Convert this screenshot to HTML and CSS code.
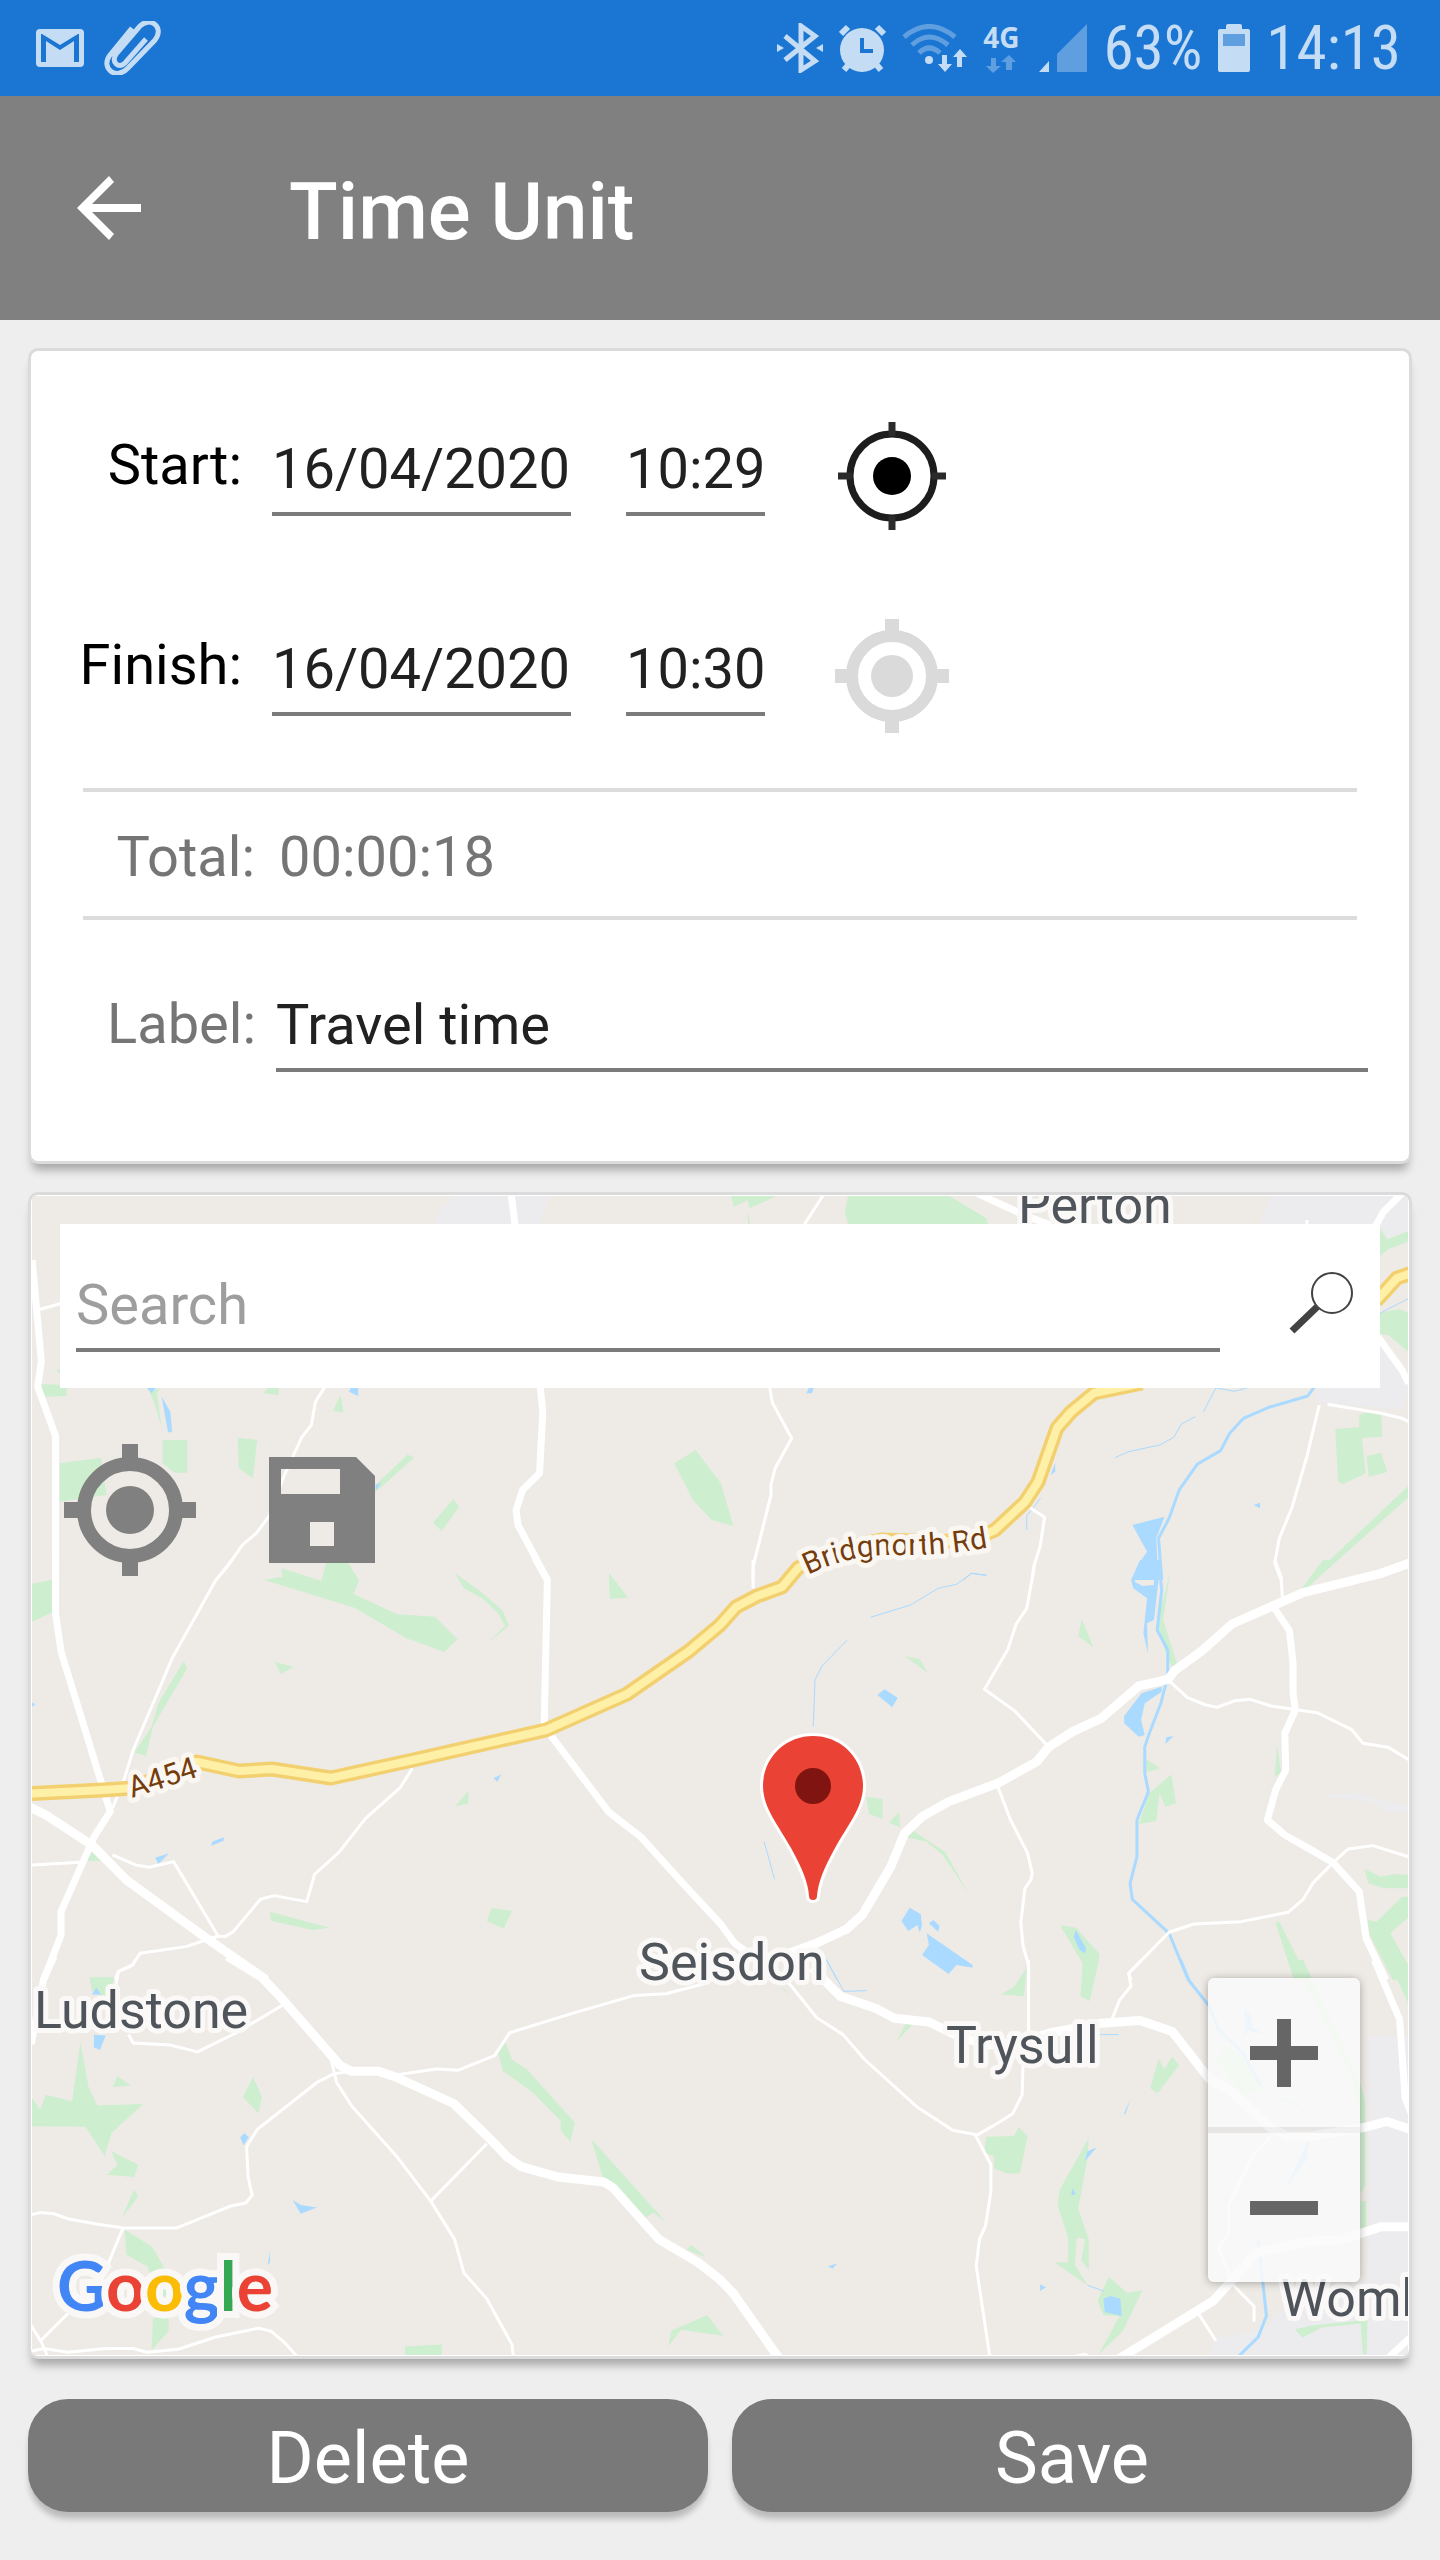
FILE: index.html
```html
<!DOCTYPE html>
<html lang="en">
<head>
<meta charset="utf-8">
<meta name="viewport" content="width=device-width, initial-scale=1">
<title>Time Unit</title>
<link rel="stylesheet" href="styles.css">
</head>
<body>
<div class="status">
  <div class="status-group">
    <svg class="gmail" viewBox="0 0 48 38" width="48" height="38" aria-hidden="true"><path class="lit" fill-rule="evenodd" d="M4 0H44Q48 0 48 4V34Q48 38 44 38H4Q0 38 0 34V4Q0 0 4 0ZM5 5V33H10V12L24 21L38 12V33H43V5H42L24 16L6 5Z"/></svg>
    <svg viewBox="0 0 58 54" width="58" height="54" aria-hidden="true"><path class="lit-line" stroke-width="5" d="M29 7L7 34C-3 47 13 60 25 47L52 19C62 6 47 -5 37 5L13 33C8 42 16 48 22 42L43 18"/></svg>
  </div>
  <div class="status-group status-right">
    <svg viewBox="0 0 46 50" width="46" height="50" aria-hidden="true"><path class="lit-line" stroke-width="5" d="M8 13L38 38L24 47V3L38 13L8 37"/><path class="lit" d="M0 21L7 25L0 29ZM46 21L39 25L46 29Z"/></svg>
    <svg viewBox="0 0 47 48" width="47" height="48" aria-hidden="true"><circle class="lit" cx="23" cy="26" r="22"/><path class="lit-line" stroke-width="6" d="M2 10L9 3M45 10L38 3M5 46L11 39M42 46L36 39"/><path class="blue-line" d="M23 14V27H34"/></svg>
    <svg viewBox="0 0 65 48" width="65" height="48" aria-hidden="true"><path class="dim-line" stroke-width="5" d="M2 13Q27 -8 53 13M10 21Q27 5 46 21M17 29Q27 19 38 29"/><circle class="lit" cx="27" cy="36" r="4"/><path class="lit" d="M40 31H45V40H50L43 48L36 40H40ZM55 43H60V33H65L58 25L51 33H55Z"/></svg>
    <span class="network">4G<svg viewBox="0 0 30 18" width="30" height="18" aria-hidden="true"><path class="dim" d="M5 3H10V11H15L7 18L0 11H5ZM20 15H26V7H30L23 0L15 7H20Z"/></svg></span>
  </div>
  <div class="status-group status-text">
    <svg viewBox="0 0 48 48" width="48" height="48" aria-hidden="true"><path class="lit" d="M0 48L10 37V48Z"/><path class="dim" d="M18 48V30L48 0V48Z"/></svg>
    <span>63%</span>
    <svg viewBox="0 0 32 48" width="32" height="48" aria-hidden="true"><path class="lit" d="M8 5V2Q8 0 10 0H22Q24 0 24 2V5H30Q32 5 32 7V46Q32 48 30 48H2Q0 48 0 46V7Q0 5 2 5Z"/><path class="dim" d="M5 10H27V22H5Z"/></svg>
    <span>14:13</span>
  </div>
</div>

<header class="bar">
  <button class="icon-btn" type="button" aria-label="Back"><svg viewBox="0 0 64 64" width="64" height="64"><path d="M64 28V36H15L37 58L32 64L0 32L32 0L37 6L15 28Z" fill="#fff"/></svg></button>
  <h1>Time Unit</h1>
</header>

<main>
  <form class="card details">
    <div class="row">
      <label for="start-date">Start:</label>
      <input class="date" id="start-date" type="text" value="16/04/2020">
      <input class="time" type="text" value="10:29" aria-label="Start time">
      <button class="icon-btn locate" type="button" aria-label="Set start location"><svg viewBox="0 0 114 114" width="114" height="114"><circle cx="57" cy="57" r="42" fill="none" stroke="#1d1d1d" stroke-width="7"/><circle cx="57" cy="57" r="19"/><path d="M57 3V17M57 97V111M3 57H17M97 57H111" stroke="#2b2b2b" stroke-width="7"/></svg></button>
    </div>
    <div class="row">
      <label for="finish-date">Finish:</label>
      <input class="date" id="finish-date" type="text" value="16/04/2020">
      <input class="time" type="text" value="10:30" aria-label="Finish time">
      <button class="icon-btn locate" type="button" aria-label="Set finish location"><svg viewBox="0 0 114 114" width="114" height="114"><g fill="none" stroke="#dadada"><circle cx="57" cy="57" r="40" stroke-width="12"/><path d="M57 0V14M57 100V114M0 57H14M100 57H114" stroke-width="14"/></g><circle cx="57" cy="57" r="21" fill="#dadada"/></svg></button>
    </div>
    <div class="total"><span class="caption">Total:</span><output>00:00:18</output></div>
    <div class="label-row">
      <label class="caption" for="unit-label">Label:</label>
      <input id="unit-label" type="text" value="Travel time">
    </div>
  </form>

  <section class="card map" aria-label="Map">
    <svg class="map-art" viewBox="32 1196 1376 1159" preserveAspectRatio="xMidYMid slice" aria-hidden="true">
      <rect class="land" x="-1000" y="0" width="4000" height="4000"/>

      <!-- north west -->
      <g transform="translate(0 1180) scale(.4592 .3333)">
        <path class="town" d="M955 90L990 48H1198L1175 132H950Z"/>
        <path class="wood" d="M88 612L145 615V648L98 650ZM123 570L135 565V590ZM573 640L585 620H608L606 645ZM742 645L748 698L725 692ZM518 773L560 780L551 895L520 865ZM354 780H408V878H380L354 850ZM130 850L220 833L232 945L130 965ZM887 824L903 832L818 936V915ZM987 958L1000 980L962 1054L943 1028ZM1468 850L1515 810L1570 910L1597 1038L1550 1020L1510 962ZM348 625L325 635L335 665L352 740L342 640Z"/>
        <path class="water" d="M318 620H342L330 640ZM352 650L371 695L375 757H366ZM760 635L765 620H780V648ZM818 915L830 908L818 932Z"/>
        <path class="lane" d="M82 390L135 370M708 620L687 665L678 735L657 772L618 890L585 1010L558 1060L528 1095L495 1160L470 1200"/>
        <path class="road" d="M1113 40L1122 140M1176 615L1182 695L1175 880L1138 930L1124 990L1128 1035L1192 1200M70 240L90 545L82 620L121 768V1200"/>
      </g>
      <!-- north east -->
      <g transform="translate(720 1180) scale(.4592 .3333)">
        <path class="town" d="M1205 40H1505V150L1460 180L1430 132H1175ZM1430 470L1505 600L1485 690L1300 665V620H1437Z"/>
        <path class="wood" d="M22 40H135L65 85L60 60L30 80ZM60 85L65 132H61ZM280 40H490L580 115L585 140H280L272 95ZM1430 130L1453 178L1505 150V182L1455 208L1430 235ZM1430 400L1480 388L1505 400V522L1455 465L1430 462ZM1340 747L1392 742V705L1410 697L1440 705L1442 770L1398 774L1406 880L1358 912L1346 905ZM1408 828L1440 818L1453 876L1413 890ZM1505 910V945L1297 1200H1282Z"/>
        <path class="water" d="M188 640L195 620H205L200 640ZM898 1035L968 1010L950 1075L955 1200H897L912 1150L930 1115ZM720 885L730 848V875ZM1162 975L1176 968V985Z"/>
        <path class="stream" d="M1430 405L1500 355M1080 624L1053 695M1080 624L1120 634L1148 624M1035 710L1005 732L988 772L958 795L890 815L860 833M698 955L668 1008V1050M530 1200L548 1180L580 1187"/>
        <path class="river" d="M1295 620L1280 648L1195 682L1140 715L1110 760L1090 812L1040 852L1000 930L978 1015L955 1075L962 1200"/>
        <path class="lane" d="M225 45L183 135M1278 120V135M1305 675L1278 830L1245 985L1218 1075L1208 1150L1222 1200M108 620L114 668L156 775L120 865L111 915V945L72 1160V1200M672 980L707 1012L697 1100L683 1160L680 1200M1323 673L1440 700L1485 715L1500 725"/>
        <path class="road" d="M560 40L615 75L670 110L720 135M1485 40L1445 95L1425 145M1430 465L1485 570L1500 610"/>
      </g>
      <!-- west -->
      <g transform="translate(0 1560) scale(.4592 .3333)">
        <path class="wood" d="M60 74L113 60V158L60 190ZM575 60L615 50L613 25L700 63L712 0H755L782 62L770 102L865 163L947 170L996 238L968 276L885 235L772 143ZM990 38L1050 98L1095 152L1108 197L1060 252L1100 197L1085 160L1050 115L1010 85ZM1326 38L1368 113L1328 117ZM598 306L640 320L612 342ZM400 303L408 325L372 408L333 500L318 588L293 578L330 500L345 430ZM1020 692V730L990 740ZM200 875L220 903H188ZM588 1055L718 1103L680 1110L590 1082ZM1070 1045L1115 1052L1097 1106L1060 1083Z"/>
        <path class="water" d="M1075 655L1092 643L1083 665ZM462 845L487 832V842L460 857ZM338 893L368 880L345 912ZM60 428H70L77 433L70 440Z"/>
        <path class="lane" d="M505 0L468 65L375 295L290 570L270 660L245 745M60 916L175 907M245 885L295 915L325 922L378 905L475 1128L490 1130L508 1115L567 1018L597 1007L668 1025L685 943L738 877L795 777L872 682L898 625M475 1128L405 1160L305 1180L287 1217L258 1235L250 1260"/>
        <path class="road" d="M121 -10V160L133 275L240 755L205 830L133 1055V1125L95 1260M1165 -5L1192 60L1185 500L1325 755L1395 830L1487 970L1568 1090L1600 1150L1640 1190"/>
        <path class="main-road" d="M60 738L100 765L200 855L275 960L450 1135L580 1260"/>
      </g>
      <!-- east -->
      <g transform="translate(720 1560) scale(.4592 .3333)">
        <path class="town" d="M1320 700H1400L1440 720L1505 740V755H1450L1420 725L1320 710Z"/>
        <path class="wood" d="M980 38L965 180L995 310L985 320L975 300L952 190ZM788 178L813 262L780 228ZM402 288L435 298L452 338ZM1213 553L1222 640L1208 650ZM928 597L958 625L928 637ZM983 643L993 730L970 740L957 700L950 783L912 792L935 700ZM318 710L354 717V777L325 762ZM390 755L392 802L368 788ZM405 832L420 812L490 875L543 1005L485 885L450 845ZM740 1095L775 1103L827 1183L815 1260H790L792 1215ZM1210 1090L1217 1083L1282 1260H1250ZM1403 927L1440 950L1465 943L1505 945V985H1445L1412 970ZM1410 1080L1430 1085L1485 1010H1505V1065L1460 1120L1505 1230V1260H1465L1415 1125ZM1340 0H1313L1265 90H1275Z"/>
        <path class="water" fill-rule="evenodd" d="M915 0H960L945 180L930 190L932 280L922 220L930 115L900 85L895 60ZM912 18L903 65L920 78L945 75V35ZM962 380V395L925 430L917 480L925 525L912 530L880 490V468L918 400ZM343 405L358 388L387 413L375 442ZM972 532L988 528L970 552ZM395 1083L413 1043L437 1062L440 1095L435 1118L430 1095L410 1113ZM455 1090L465 1080L478 1098L475 1115ZM450 1120L550 1215V1223L515 1215L498 1242L440 1185L455 1155ZM775 1110L797 1165L795 1180L783 1170L770 1130Z"/>
        <path class="stream" d="M580 45L548 40L515 73L475 85L415 135L328 172M277 240L222 318L207 360L203 500M96 845L119 958M228 1190L255 1260"/>
        <path class="river" d="M955 0L962 90L952 210L975 270V350L960 430L935 520L925 560V640L933 695L908 780V890L893 970L898 1018L978 1120L1020 1260"/>
        <path class="lane" d="M687 0L668 145L645 192L627 268L576 388L642 453L715 560M605 680L632 778L670 880L680 940L677 960L664 985L655 1088L660 1158L672 1215V1260M980 365L1018 413L1058 435L1082 442L1122 422L1155 418L1200 438L1300 458L1375 508L1400 550L1455 562L1505 603M1505 893L1422 857L1368 867L1335 908L1292 968L1270 1018L1237 1057L1135 1085L1032 1092L978 1117L890 1240L895 1260M1208 0L1222 50L1225 120M72 0V85"/>
        <path class="road" d="M1205 140L1240 212L1248 310V400L1253 450L1230 520L1232 630L1210 690L1192 780L1230 825L1275 860L1335 908L1392 995L1407 1135L1450 1260"/>
        <path class="main-road" d="M1510 5L1440 40L1270 98L1205 137L1115 192L1050 272L990 332L976 358L912 378L830 475L768 515L715 562L690 605L605 670L498 725L440 770L402 820L372 920L310 1065L275 1108L210 1150L150 1180"/>
      </g>
      <!-- south west -->
      <g transform="translate(0 1960) scale(.4592 .3827)">
        <path class="wood" d="M175 215L193 333L212 380L312 376L243 452L228 512L186 436L60 434V345L87 390L100 352L157 370ZM255 303L285 328L246 332ZM551 306L570 356L563 401L529 358ZM242 499L301 535L292 567L232 561L256 535ZM292 600L301 618L265 675ZM272 705L332 750L365 820L400 880H350L320 800L275 770ZM333 937L367 930V970L330 1020ZM1100 212L1115 260L1148 286L1252 425L1242 475L1221 445V420L1157 343L1095 290L1085 245ZM1287 467L1452 687L1422 660L1405 675L1335 590L1312 565ZM1505 745L1538 777L1495 757ZM1455 1010L1462 968L1540 928L1575 982L1483 966ZM882 1010L962 1005V1040H882ZM195 45H250L230 100L200 80Z"/>
        <path class="water" d="M205 195L230 197L218 235L204 228ZM523 463L532 453L542 463L530 484ZM637 627L655 640L690 647L655 663ZM588 760V790L583 797ZM200 90L210 72L220 90Z"/>
        <path class="lane" d="M295 0L290 12L258 30L250 80M280 195L290 217L370 222L430 240L515 190L617 117M720 255L733 320L765 380L865 515L938 630L990 730L1010 817L1060 885L1115 1005L1118 1040M765 291L728 297L690 320L560 443L537 488L540 565L549 615L535 635L505 642L385 700H268L210 690L150 677L118 663L87 660L60 668M268 700L220 838L90 993M60 940L90 998L105 1040M60 1024L95 1015L148 1025L230 1015H290L320 1025L388 1017L470 985L563 962L590 970L620 1000L650 1040M1060 480L938 630M865 300L950 285L998 288L1077 250L1110 190L1250 138L1380 93L1450 88L1540 60"/>
        <path class="road" d="M118 -10L95 50L85 110L68 220"/>
        <path class="main-road" d="M495 -10L570 45L617 105L740 275L765 291H825L860 305L988 375L1065 465L1105 515L1135 540L1215 567L1315 580L1335 595L1435 730L1520 790L1568 835L1596 870L1696 1040"/>
      </g>
      <!-- south east -->
      <g transform="translate(720 1960) scale(.4592 .3827)">
        <path class="town" d="M1412 198H1510V1040H1065L1080 990L1180 965L1240 900L1405 840L1412 760Z"/>
        <path class="wood" d="M668 20L662 95L612 90L640 70ZM790 0H825L805 108L785 95ZM405 165L418 170L385 212ZM127 60L155 95L140 80ZM955 258L967 285L985 253L1000 275L953 348L937 335ZM580 462L640 460L650 437L670 460L653 558H625L597 545V512L575 505ZM803 465L800 520L780 650L803 730V810L787 785L795 730L777 725L773 797L800 850L728 790H758V725L735 640L740 600ZM847 828L887 870L920 863L877 970L825 1030L870 930L835 928L822 890ZM1250 0H1270L1395 325L1405 370V590L1395 610V420L1380 320ZM1455 0H1490L1505 60V130ZM1395 630H1407V700L1395 710ZM1100 222L1145 260L1180 345L1135 355L1120 320L1080 270ZM1252 965L1290 955L1410 940L1408 1030H1400L1395 950L1310 960L1268 987Z"/>
        <path class="water" d="M895 362L882 405L880 400ZM820 490L795 525L800 500ZM768 597L775 612L765 615ZM835 885L850 878L872 885L875 930L838 920ZM697 848L710 855L697 865ZM235 800L255 793L245 807ZM1140 128L1155 140L1160 175L1185 195L1150 185L1140 205L1145 165ZM1283 465L1278 520L1228 605L1262 520Z"/>
        <path class="stream" d="M232 0L270 82L320 80M780 195H868M800 850L835 865M1215 360L1250 372L1272 395"/>
        <path class="river" d="M1003 0L1022 55L1065 120L1085 180L1140 245L1178 330M1172 730L1190 930L1172 985L1130 1035"/>
        <path class="lane" d="M150 60L210 150L268 195L315 260L430 385L507 445L560 457L600 430L637 402L658 352L660 270M672 0V190M918 0L890 35L895 68L870 105L852 160M555 455L590 535V605L578 695L565 730L558 800L588 1040M1200 460L1163 505L1108 640V710L1085 755L1118 850L1163 905V945M1040 920L1080 995M765 1038L795 1030L805 1038"/>
        <path class="road" d="M1425 0L1480 155L1492 360L1505 400M1455 1040L1505 985"/>
        <path class="main-road" d="M200 20L262 95L340 127L380 152L455 162L520 200L585 222L650 215L720 190L830 165L915 158L985 187L1065 310L1120 350L1200 440L1235 460H1290L1405 437L1452 422L1505 443M865 1045L1075 890L1168 765L1280 735L1350 732L1440 697H1510"/>
      </g>

      <g class="a-road">
        <path class="a-road-edge" d="M20 1794L103 1790L133 1788L188 1764L197 1762L239 1771L272 1769L331 1778L413 1760L546 1730L627 1694L689 1651L720 1625L736 1607L757 1596L782 1587L798 1568L835 1550L881 1540L940 1542L977 1538L995 1530L1025 1502L1038 1482L1057 1428L1071 1412L1094 1393L1142 1383M1376 1301L1397 1278L1415 1272"/>
        <path class="a-road-fill" d="M20 1794L103 1790L133 1788L188 1764L197 1762L239 1771L272 1769L331 1778L413 1760L546 1730L627 1694L689 1651L720 1625L736 1607L757 1596L782 1587L798 1568L835 1550L881 1540L940 1542L977 1538L995 1530L1025 1502L1038 1482L1057 1428L1071 1412L1094 1393L1142 1383M1376 1301L1397 1278L1415 1272"/>
      </g>

      <path id="bridgnorth" fill="none" d="M808 1575Q850 1554 895 1555T986 1548L1040 1536"/>
      <g class="road-name">
        <text><textPath href="#bridgnorth">Bridgnorth Rd</textPath></text>
        <text transform="translate(132 1798) rotate(-18)">A454</text>
      </g>
      <g class="place">
        <text x="1018" y="1223">Perton</text>
        <text x="639" y="1980">Seisdon</text>
        <text x="34" y="2028">Ludstone</text>
        <text x="946" y="2063">Trysull</text>
        <text x="1281" y="2316">Wombourne</text>
      </g>
      <path class="pin" d="M813 1736C841 1736 863 1758 863 1786C863 1808 847 1826 835 1848C824 1868 818 1882 817 1896Q817 1900 813 1900Q809 1900 809 1896C808 1882 802 1868 791 1848C779 1826 763 1808 763 1786C763 1758 785 1736 813 1736Z"/>
      <circle cx="813" cy="1786" r="18" fill="#7f1410"/>
    </svg>

    <div class="map-top">
      <form class="search">
        <input type="text" placeholder="Search" aria-label="Search">
        <button class="icon-btn" type="button" aria-label="Search the map"><svg viewBox="0 0 66 64" width="66" height="64"><circle cx="44" cy="23" r="20" fill="none" stroke="#424242" stroke-width="2"/><path d="M29 37L4 61" stroke="#424242" stroke-width="7"/></svg></button>
      </form>
      <div class="tools">
        <button class="icon-btn" type="button" aria-label="My location"><svg viewBox="0 0 134 134" width="134" height="134"><g fill="none" stroke="#808080"><circle cx="67" cy="67" r="46" stroke-width="14"/><path d="M67 1V18M67 116V133M1 67H18M116 67H133" stroke-width="16"/></g><circle cx="67" cy="67" r="24" fill="#808080"/></svg></button>
        <button class="icon-btn" type="button" aria-label="Save location"><svg viewBox="0 0 106 106" width="106" height="106"><path fill="#808080" fill-rule="evenodd" d="M0 0H87L106 19V106H0ZM12 12V37H71V12ZM41 65V89H65V65Z"/></svg></button>
      </div>
    </div>

    <div class="zoom">
      <button type="button" aria-label="Zoom in"><svg viewBox="0 0 68 68" width="68" height="68"><path d="M27 0H41V27H68V41H41V68H27V41H0V27H27Z" fill="#666"/></svg></button>
      <button type="button" aria-label="Zoom out"><svg viewBox="0 0 68 68" width="68" height="68"><path d="M0 27H68V41H0Z" fill="#666"/></svg></button>
    </div>
    <div class="google"><span class="g-blue">G</span><span class="g-red">o</span><span class="g-yellow">o</span><span class="g-blue">g</span><span class="g-green">l</span><span class="g-red">e</span></div>
  </section>

  <div class="actions">
    <button type="button">Delete</button>
    <button type="button">Save</button>
  </div>
</main>
</body>
</html>
```
FILE: styles.css
```css
* { box-sizing: border-box; }

body {
  margin: 0;
  min-height: 100vh;
  display: flex;
  flex-direction: column;
  background: #eee;
  color: #212121;
  font-family: Roboto, "Liberation Sans", sans-serif;
  font-size: 56px;
  line-height: 64px;
}

svg { display: block; flex: none; }
button, input { font: inherit; color: inherit; border: 0; margin: 0; padding: 0; background: none; }
button { cursor: pointer; }
input { min-width: 0; border-bottom: 4px solid #7b7b7b; padding-bottom: 10px; height: 80px; border-radius: 0; }
input::placeholder { color: #9e9e9e; opacity: 1; }
.icon-btn { display: flex; align-items: center; justify-content: center; flex: none; }

/* status bar */
.status { display: flex; align-items: center; height: 96px; padding: 0 39px 0 36px; background: #1a75d3; color: #c4dcf4; }
.status-group { display: flex; align-items: center; gap: 19px; }
.status-right { margin-left: auto; gap: 16px; margin-right: 20px; }
.status-text { gap: 16px; font-family: "Roboto Condensed", "Liberation Sans Narrow", Roboto, sans-serif; font-size: 61px; }
.network { display: flex; flex-direction: column; align-items: center; gap: 4px; font: bold 28px/28px "Open Sans", sans-serif; }
.lit { fill: #c4dcf4; }
.dim { fill: #5f9fe0; }
.lit-line { fill: none; stroke: #c4dcf4; }
.dim-line { fill: none; stroke: #5f9fe0; }
.blue-line { fill: none; stroke: #1a75d3; stroke-width: 4px; }

/* title bar */
.bar { display: flex; align-items: center; gap: 148px; height: 224px; padding: 0 77px; background: #808080; color: #fff; }
.bar h1 { margin: 0; padding-top: 8px; font-size: 80px; line-height: 96px; font-weight: 500; }

main { flex: 1; display: flex; flex-direction: column; padding: 28px 28px 48px; }
.card { background: #fff; border: 3px solid #dbdbdb; border-radius: 10px; box-shadow: 0 10px 10px -4px rgba(0, 0, 0, .3); }

/* times and label */
.details { padding: 25px 0 89px; }
.row { display: flex; align-items: center; height: 200px; }
.row label { width: 211px; margin-right: 30px; padding-bottom: 22px; text-align: right; color: #000; }
.date { width: 299px; margin-right: 55px; }
.time { width: 139px; margin-right: 70px; }
.total { display: flex; gap: 24px; margin: 12px 52px 0; padding: 33px 0 27px; border: solid #dcdcdc; border-width: 4px 0; color: #757575; }
.caption { width: 225px; text-align: right; color: #757575; }
.total .caption { width: 172px; }
.label-row { display: flex; gap: 20px; margin: 72px 41px 0 0; }
.label-row input { flex: 1; }

/* map */
.map { position: relative; flex: 1; min-height: 900px; margin-top: 28px; padding: 1px; overflow: hidden; }
.map-art { position: absolute; inset: 1px; width: calc(100% - 2px); height: calc(100% - 2px); }
.map-top { position: relative; padding: 28px; }
.search { display: flex; align-items: flex-end; height: 164px; padding: 0 0 36px 16px; background: #fff; }
.search input { flex: 1; }
.search .icon-btn { width: 160px; padding: 0 0 18px 50px; justify-content: flex-start; }
.search .icon-btn svg { margin-left: 18px; }
.tools { display: flex; align-items: center; gap: 72px; padding: 55px 3px; }
.zoom { position: absolute; right: 49px; bottom: 74px; width: 152px; display: flex; flex-direction: column; gap: 6px; border-radius: 6px; background: rgba(225, 225, 225, .5); box-shadow: 0 1px 8px rgba(0, 0, 0, .3); overflow: hidden; }
.zoom button { display: flex; align-items: center; justify-content: center; height: 149px; background: rgba(255, 255, 255, .72); }
.google { position: absolute; left: 26px; bottom: 27px; font: 700 68px/88px Lato, sans-serif; paint-order: stroke; -webkit-text-stroke: 14px #f9f8f6; }
.g-blue { color: #4285f4; }
.g-red { color: #ea4335; }
.g-yellow { color: #fbbc05; }
.g-green { color: #34a853; }

.map-art path { vector-effect: non-scaling-stroke; stroke-linejoin: round; }
.land { fill: #eeebe6; }
.town { fill: #ecebee; }
.wood { fill: #cdeecf; }
.water { fill: #aadaff; }
.stream, .river, .lane, .road, .main-road, .a-road-edge, .a-road-fill { fill: none; }
.stream { stroke: #aadaff; stroke-width: 1px; }
.river { stroke: #aadaff; stroke-width: 3px; }
.lane { stroke: #fff; stroke-width: 3px; }
.road { stroke: #fff; stroke-width: 7px; }
.main-road { stroke: #fff; stroke-width: 9px; }
.a-road-edge { stroke: #f3d06f; stroke-width: 15px; }
.a-road-fill { stroke: #fff0a8; stroke-width: 8px; }
.road-name { fill: #753c0c; stroke: #faf7f3; stroke-width: 10px; stroke-linejoin: round; paint-order: stroke; font-size: 30px; }
.place { fill: #50555c; stroke: #faf9f7; stroke-width: 10px; stroke-linejoin: round; paint-order: stroke; font-size: 52px; }
.pin { fill: #ea4335; stroke: #fff; stroke-width: 6px; paint-order: stroke; }

/* actions */
.actions { display: grid; grid-template-columns: 1fr 1fr; gap: 24px; margin-top: 40px; }
.actions button { height: 113px; padding-top: 7px; border-radius: 40px; background: #797979; color: #fff; font-size: 72px; line-height: 88px; box-shadow: 0 8px 6px -1px rgba(0, 0, 0, .22); }
```
